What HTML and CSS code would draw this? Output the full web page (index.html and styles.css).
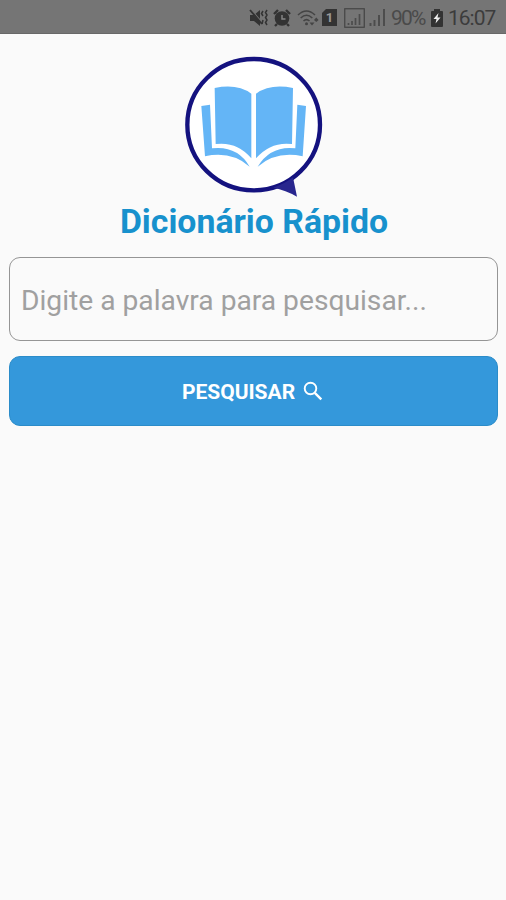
FILE: index.html
```
<!DOCTYPE html>
<html lang="pt-BR">
<head>
    <meta charset="UTF-8">
    <meta name="viewport" content="width=device-width, initial-scale=1.0">
    <title>Dicionário Rápido</title>
    <link rel="stylesheet" href="styles.css">
</head>
<body>
    <div class="status-bar">
        <!-- vibrate / muted -->
        <svg class="icon-mute" width="20" height="20" viewBox="0 0 20 20">
            <path d="M1 7h4l6-5v16l-6-5H1z" fill="#333"/>
            <path d="M2.500 2l12 14" stroke="#757575" stroke-width="1.2"/>
            <path d="M1 2l12 14" stroke="#333" stroke-width="1.8"/>
            <path d="M14 3l-1.500 2.500L14 8M14 12l-1 4M18 2l-1.500 2.500L18 7l-1.500 2.500L18 12l-1.500 2.500L18 17" fill="none" stroke="#333" stroke-width="1.5"/>
        </svg>
        <!-- alarm -->
        <svg class="icon-alarm" width="18" height="20" viewBox="0 0 18 20">
            <circle cx="9" cy="10.500" r="7.300" fill="#333"/>
            <path d="M1 6l4-4M17 6l-4-4M4 16l-2 2M14 16l2 2" stroke="#333" stroke-width="2.400"/>
            <path d="M9 7v4h3.500" fill="none" stroke="#888" stroke-width="1.400"/>
        </svg>
        <!-- wifi -->
        <svg class="icon-wifi" width="22" height="20" viewBox="0 0 22 20">
            <path d="M1 7Q9.500-1 18 7M3.700 10q5.800-5.500 11.600 0M6.500 13q3-2.700 6 0" fill="none" stroke="#444" stroke-width="1.600"/>
            <circle cx="9.500" cy="15.800" r="1.500" fill="#444"/>
            <path d="M12.500 14.500h5L15 17.500zM17 12l2.300-2.500 2.300 2.500-2.300 2z" fill="#444"/>
        </svg>
        <!-- sim 1 -->
        <div class="sim">1</div>
        <!-- signal, boxed -->
        <svg class="icon-signal-box" width="21" height="20" viewBox="0 0 21 20">
            <rect x=".75" y=".75" width="19.500" height="18.500" fill="none" stroke="#444" stroke-width="1.200"/>
            <path d="M4.500 17v-2M8 17v-4M11.500 17v-7M15.500 17V6" stroke="#4c4c4c" stroke-width="1.700"/>
        </svg>
        <svg class="icon-signal" width="17" height="20" viewBox="0 0 17 20">
            <path d="M1.500 18v-3M5.500 18v-6M10 18V7M15 18V1" stroke="#4c4c4c" stroke-width="1.900"/>
        </svg>
        <span class="battery-level">90%</span>
        <!-- battery charging -->
        <svg class="icon-battery" width="12" height="18" viewBox="0 0 12 18">
            <path d="M0 3q0-1 1-1h2V0h6v2h2q1 0 1 1v14q0 1-1 1H1q-1 0-1-1z" fill="#333"/>
            <path d="M7.500 4L2.500 10h3L4.500 14.500l5-6h-3z" fill="#eee"/>
        </svg>
        <span class="clock">16:07</span>
    </div>

    <div class="container">
        <svg class="logo" width="140" height="144" viewBox="30 24 420 432">
            <ellipse cx="239" cy="236" rx="199" ry="197" fill="#fff" stroke="#14127f" stroke-width="13"/>
            <path d="M298 425Q335 412 357 394L369 452Q335 432 298 425Z" fill="#28268e"/>
            <g fill="#64b5f6">
                <path d="M122 126Q190 112 232 143V337Q190 286 125 294Z"/>
                <path d="M357 126Q289 112 246 143V337Q290 286 354 294Z"/>
                <path d="M82 180L108 176L114 307Q190 298 227 362Q172 314 93 331Z"/>
                <path d="M396 180L370 176L364 307Q290 298 251 362Q307 314 386 331Z"/>
            </g>
        </svg>
        <h1 class="title">Dicionário Rápido</h1>

        <input class="search-input" type="text" placeholder="Digite a palavra para pesquisar...">

        <button class="search-button">
            <span class="search-label">PESQUISAR</span>
            <svg class="icon-search" width="20" height="20" viewBox="0 0 20 20">
                <circle cx="7.500" cy="7.500" r="5.800" fill="none" stroke="#fff" stroke-width="1.900"/>
                <path d="M11.800 11.800l6.500 6.500" stroke="#fff" stroke-width="2.400"/>
            </svg>
        </button>
    </div>
</body>
</html>
```
FILE: styles.css
```
* {
    margin: 0;
    padding: 0;
    box-sizing: border-box;
}

body {
    background: #fafafa;
    font-family: Roboto, sans-serif;
    height: 100vh;
    overflow: hidden;
}

/* Android status bar */
.status-bar {
    display: flex;
    align-items: center;
    justify-content: flex-end;
    height: 34px;
    padding-top: 2px;
    padding-right: 11px;
    background: #757575;
    border-bottom: 1px solid #686868;
    color: #3c3c3c;
}

.icon-alarm {
    margin-left: 4px;
}

.icon-wifi {
    margin-left: 6px;
}

.sim {
    width: 15px;
    height: 17px;
    margin-left: 3px;
    background: #333;
    clip-path: polygon(4px 0, 100% 0, 100% 100%, 0 100%, 0 4px);
    color: #999;
    font-size: 13px;
    font-weight: 700;
    line-height: 18px;
    text-align: center;
}

.icon-signal-box {
    margin-left: 7px;
}

.icon-signal {
    margin-left: 4px;
}

.battery-level {
    width: 34px;
    margin-left: 5px;
    font-size: 21px;
    letter-spacing: -1.8px;
    color: #4a4a4a;
}

.icon-battery {
    margin-left: 6px;
}

.clock {
    width: 47px;
    margin-left: 5px;
    font-size: 21px;
    letter-spacing: -1px;
}

.container {
    display: flex;
    flex-direction: column;
    align-items: center;
    padding: 20px 8px 0 9px;
}

.logo {
    display: block;
}

.title {
    margin-top: 4px;
    padding-left: 1px;
    color: #1791cd;
    font-size: 33.8px;
    font-weight: 700;
    line-height: 40px;
    white-space: nowrap;
}

.search-input {
    width: 100%;
    height: 84px;
    margin-top: 15px;
    padding: 3px 11px 0 11px;
    border: 1.5px solid #959595;
    border-radius: 11px;
    background: #fafafa;
    font-family: inherit;
    font-size: 28.2px;
}

.search-input::placeholder {
    color: #a0a0a0;
    opacity: 1;
}

.search-button {
    display: flex;
    align-items: center;
    justify-content: center;
    gap: 8px;
    width: 100%;
    height: 70px;
    margin-top: 15px;
    padding: 2px 2px 0 0;
    border: 1px solid #2b8cc9;
    border-radius: 11px;
    background: #3498db;
    color: #fff;
    font-family: inherit;
    font-size: 21px;
    font-weight: 700;
}

.icon-search {
    margin-bottom: 2px;
}
```
